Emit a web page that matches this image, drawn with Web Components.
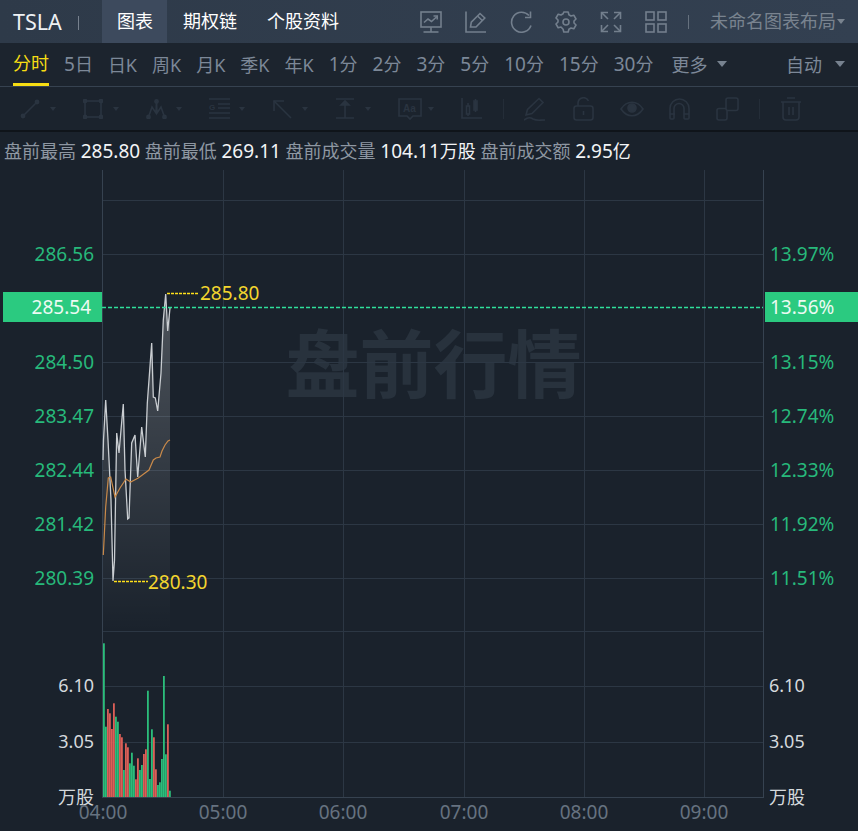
<!DOCTYPE html>
<html><head><meta charset="utf-8">
<style>
html,body{margin:0;padding:0;background:#1a222c;}
body{width:858px;height:831px;overflow:hidden;font-family:"Noto Sans","Noto Sans CJK SC",sans-serif;}
</style></head>
<body>
<app-header></app-header>
<period-bar></period-bar>
<draw-bar></draw-bar>
<quote-info></quote-info>
<chart-panel></chart-panel>
<script>
const FONT='"Noto Sans","Noto Sans CJK SC",sans-serif';
function mk(name,css,html){
  customElements.define(name,class extends HTMLElement{
    constructor(){super();const r=this.attachShadow({mode:'open'});r.innerHTML='<style>'+css+'</style>'+html;}
  });
}
const ico=(w,h,body,extra='')=>`<svg width="${w}" height="${h}" viewBox="0 0 ${w} ${h}" fill="none" stroke="currentColor" stroke-width="1.6" ${extra}>${body}</svg>`;

mk('app-header',`
:host{display:flex;align-items:center;height:43px;background:linear-gradient(90deg,#2e3a49,#334051);color:#fff;font-size:18px;line-height:43px;box-sizing:border-box;}
.sym{margin-left:13px;font-size:21.5px;width:65px;color:#eef1f4}
.sep{width:1px;height:14px;background:#77818e;margin-top:2px}
.tabs{display:flex;margin-left:23px}
.tab{padding:0 16px;color:#fff}
.tab.on{background:#3d4a5d;padding:0 14px 0 15px;width:36px}
.tab.t3{margin-left:-2px}
.icons{display:flex;align-items:center;margin-left:auto;color:#737f8d}
.icons svg{display:block}
.i{display:flex;width:45px;justify-content:center}
.lay{color:#79838f;font-size:18px;margin-left:21px;width:126px;white-space:nowrap}
.c{width:0;height:0;border-left:4px solid transparent;border-right:4px solid transparent;border-top:5px solid #79838f;margin:0 13px 0 1px;}
.s2{width:1px;height:14px;background:#66717e;margin-left:10px}
`,`
<span class="sym">TSLA</span><span class="sep"></span>
<div class="tabs"><span class="tab on">图表</span><span class="tab">期权链</span><span class="tab t3">个股资料</span></div>
<div class="icons">
<span class="i">${ico(22,22,'<rect x="1" y="1" width="20" height="15"/><path d="M4 11.500l4-3.500 3.500 2.500 5.500-5"/><path d="M13.500 5h3.700v3.500"/><path d="M11 16v5"/><path d="M3.500 21h15"/>')}</span>
<span class="i">${ico(22,22,'<path d="M1 .5V21h20"/><path d="M5.500 16l.8-4.800L15 2.500l4.800 4.500L11 16z"/><path d="M12.500 5l4.800 4.500"/>')}</span>
<span class="i">${ico(22,22,'<path d="M19 4.500A10 10 0 1 0 21 14.500"/><path d="M20.500 .5v6h-5.500"/>')}</span>
<span class="i">${ico(22,22,'<circle cx="11" cy="11" r="3"/><path d="M8.800 1h4.400l.7 2.800 2.100 1.200 2.800-.8 2.200 3.800-2 2v2l2 2-2.200 3.800-2.800-.8-2.100 1.200-.7 2.800H8.800l-.7-2.800L6 16l-2.800.8L1 13l2-2V9L1 7l2.200-3.800L6 4l2.100-1.200z" stroke-linejoin="round"/>')}</span>
<span class="i">${ico(22,22,'<path d="M1.500 8V1.500H8"/><path d="M1.500 1.500l6.500 6.500"/><path d="M14 1.500h6.500V8"/><path d="M20.500 1.500l-6.500 6.500"/><path d="M1.500 14v6.500H8"/><path d="M1.500 20.500l6.500-6.500"/><path d="M14 20.500h6.500V14"/><path d="M20.500 20.500l-6.500-6.500"/>')}</span>
<span class="i">${ico(22,22,'<rect x="1" y="1" width="8" height="8"/><rect x="13" y="1" width="8" height="8"/><rect x="1" y="13" width="8" height="8"/><rect x="13" y="13" width="8" height="8"/>')}</span>
<span class="s2"></span>
<span class="lay">未命名图表布局</span><span class="c"></span>
</div>`);

const periods=['<em>5</em>日','日K','周K','月K','季K','年K','<em>1</em>分','<em>2</em>分','<em>3</em>分','<em>5</em>分','<em>10</em>分','<em>15</em>分','<em>30</em>分'];
mk('period-bar',`
:host{display:flex;align-items:center;height:44px;box-sizing:border-box;border-bottom:1px solid #364250;background:#1c242e;font-size:18px;padding:0 0 2px 13px;color:#7c8898}
span{white-space:nowrap}
em{font-style:normal;font-size:19px}
.p{margin-left:15px}
.on{color:#f6dd13;align-self:flex-start;height:43px;line-height:41px;box-sizing:border-box;border-bottom:3px solid #f6dd13;}
.c{width:0;height:0;border-left:5px solid transparent;border-right:5px solid transparent;border-top:6px solid #77828f;}
.more{margin-left:18px}
.auto{margin-left:auto;margin-right:13px}
`,`
<span class="on">分时</span>${periods.map(p=>`<span class="p">${p}</span>`).join('')}
<span class="more">更多</span><span class="c" style="margin-left:10px"></span>
<span class="auto">自动</span><span class="c" style="margin-right:13px"></span>`);

const tool=(w,svg)=>`<span class="t" style="width:${w}px"><span class="b">${svg}</span><i></i></span>`;
mk('draw-bar',`
:host{display:flex;align-items:center;height:45px;box-sizing:border-box;border-bottom:2px solid #0f141a;background:#1b232d;color:#2a3440;padding-left:20px}
.t{display:flex;align-items:center;flex:none}
.b{display:block;width:30px;flex:none}
svg{display:block;flex:none}
i{display:block;width:0;height:0;border-left:3px solid transparent;border-right:3px solid transparent;border-top:4px solid currentColor}
.v{width:1px;height:20px;background:#242d38;flex:none}
`,`
${tool(63,ico(20,20,'<path d="M3 17L17 3"/><circle cx="3" cy="17" r="1.600" fill="currentColor"/><circle cx="17" cy="3" r="1.600" fill="currentColor"/>'))}
${tool(63,ico(20,20,'<rect x="2" y="2" width="16" height="16"/><circle cx="2" cy="2" r="1.600" fill="currentColor"/><circle cx="18" cy="2" r="1.600" fill="currentColor"/><circle cx="2" cy="18" r="1.600" fill="currentColor"/><circle cx="18" cy="18" r="1.600" fill="currentColor"/>'))}
${tool(63,ico(21,20,'<path d="M2.500 18L6 8l4 6 .5-12 .5 12 4-6 3.500 10"/><circle cx="2.500" cy="18" r="1.600" fill="currentColor"/><circle cx="18.500" cy="18" r="1.600" fill="currentColor"/><circle cx="10.500" cy="2.500" r="1.600" fill="currentColor"/>'))}
${tool(63,ico(21,21,'<path d="M0 1h21M9 6h12M9 10h12M0 15h21M0 20h21"/><text x="0" y="11.500" font-size="8" font-weight="700" stroke="none" fill="currentColor" font-family="Liberation Sans">G</text>'))}
${tool(63,ico(20,20,'<path d="M2 2l17 17"/><path d="M2 12V2h10"/>'))}
${tool(63,ico(20,21,'<path d="M1 1h18M1 20h18M10 3v17"/><path d="M6 7l4-4 4 4z" fill="currentColor"/>'))}
${tool(63,ico(24,24,'<path d="M1 2h22v17h-8l-3 3-3-3H1z"/><text x="5" y="15" font-size="10" font-weight="700" stroke="none" fill="currentColor" font-family="Liberation Sans">Aa</text>'))}
<span class="t" style="width:42px">${ico(21,21,'<path d="M1 0v20h20"/><rect x="5.500" y="8" width="3" height="8"/><rect x="13" y="3" width="3" height="9" fill="currentColor"/><path d="M7 5v3M7 16v2M14.500 1v2M14.500 12v2"/>')}</span>
<span class="v" style="margin-right:20px"></span>
<span class="t" style="width:49px">${ico(21,24,'<path d="M2 18L3.500 12.500 15 1.500l4 4L8 16.500z"/><path d="M0 23c4-3 6-3 9-1 4 2 6 1 12 1"/>')}</span>
<span class="t" style="width:47px">${ico(21,24,'<rect x="1" y="9" width="19" height="14" rx="2.500"/><path d="M5 9V6a5.500 5.500 0 0 1 10.500-2"/><path d="M10.500 14v4"/>')}</span>
<span class="t" style="width:49px">${ico(24,18,'<path d="M1 9c6-9 16-9 22 0-6 9-16 9-22 0z"/><circle cx="12" cy="8" r="4" fill="currentColor"/>')}</span>
<span class="t" style="width:47px">${ico(21,22,'<path d="M1 20V10.500a9.500 9.500 0 0 1 19 0V20a1 1 0 0 1-1 1h-3a1 1 0 0 1-1-1V10.500a5 5 0 0 0-10 0V20a1 1 0 0 1-1 1H2a1 1 0 0 1-1-1zM1 16h5M15 16h5"/>')}</span>
<span class="t" style="width:43px">${ico(23,24,'<rect x="10" y="1" width="12" height="12.500" rx="2"/><path d="M10 11.500H3a2 2 0 0 0-2 2V21a2 2 0 0 0 2 2h6a2 2 0 0 0 2-2v-7.500"/>')}</span>
<span class="v" style="margin-right:21px"></span>
<span class="t">${ico(20,24,'<path d="M6 1h8M0 5h20M2 5v15a3 3 0 0 0 3 3h10a3 3 0 0 0 3-3V5M8 10v8M12 10v8"/>')}</span>`);

mk('quote-info',`
:host{display:block;height:38px;line-height:38px;padding-left:4px;font-size:18px;color:#8e97a2;background:#1a222c;white-space:nowrap;box-sizing:border-box}
b{font-weight:400;color:#f2f4f6;font-size:19px}
u{text-decoration:none;font-size:18px}
`,`盘前最高 <b>285.80</b> 盘前最低 <b>269.11</b> 盘前成交量 <b>104.11<u>万股</u></b> 盘前成交额 <b>2.95<u>亿</u></b>`);

const white=[[103,460],[103.5,440],[105.7,400],[108,440],[111,500],[113,581],[114.5,560],[116.7,433],[119,453],[121,430],[123.3,404],[125,470],[127.7,519],[129,518],[131.7,443],[135,435],[137.7,477],[141.7,427],[145.3,457],[147.3,403],[149,380],[151.7,343],[153.3,397],[155.3,398],[157.7,411],[161,373],[163.3,320],[165.7,294],[167.7,331],[170,308]];
const orange=[[103.3,555],[105.7,507],[108.3,478],[110.7,477],[115,497],[120,488],[126,479],[130.7,482],[138.3,478],[145,473],[149,470],[153.3,460],[156,458],[160,457],[162,451],[165,445],[168,441],[170,440]];
const pts=a=>a.map(p=>p.join(',')).join(' ');
const tops=[40,290,237,250,297,220,260,275,312,322,420,340,352,400,368,407,448,385,420,405,372,358,182,447,298,322,418,465,457,387,138,373,283,482];
const cols='GGRRRRGGRRGRRGGGRRGGRRGGGRRGGGGGRG';
const bars=tops.map((t,i)=>{const y=630+t/3;return `<rect x="${103+2*i}" y="${y.toFixed(1)}" width="1.8" height="${(797-y).toFixed(1)}" fill="${cols[i]=='G'?'#2bbd7b':'#dc5f58'}"/>`}).join('');
const H=[200,254,362,416,470,524,578,631,686,742];
const V=[223,343,464,584,704];
const leftL=[[254,'286.56'],[362,'284.50'],[416,'283.47'],[470,'282.44'],[524,'281.42'],[578,'280.39']];
const rightL=[[254,'13.97%'],[362,'13.15%'],[416,'12.74%'],[470,'12.33%'],[524,'11.92%'],[578,'11.51%']];
const times=[[103,'04:00'],[223,'05:00'],[343,'06:00'],[464,'07:00'],[584,'08:00'],[704,'09:00']];
mk('chart-panel',`
:host{display:block;position:relative;height:661px;background:#1a222c}
svg{position:absolute;left:0;top:0;display:block}
text{font-family:${FONT};font-size:19px}
.wm{font-size:74px;font-weight:700;fill:#28323d}
.g{fill:#27b97b}
.w{fill:#d5d9dd;font-size:18px}
.t{fill:#667280}
.y{fill:#f3d52e}
.dy{stroke:#ffe01a;stroke-width:1.4;stroke-dasharray:3 1}
.dg{stroke:#2fe09a;stroke-width:1.4;stroke-dasharray:4 2}
`,`<svg width="858" height="661" viewBox="0 170 858 661">
<defs><linearGradient id="ar" x1="0" y1="300" x2="0" y2="631" gradientUnits="userSpaceOnUse"><stop offset="0" stop-color="#fff" stop-opacity=".22"/><stop offset="1" stop-color="#fff" stop-opacity="0"/></linearGradient></defs>
<text class="wm" x="433.500" y="392" text-anchor="middle">盘前行情</text>
<g stroke="#2c3744" stroke-width="1" shape-rendering="crispEdges">
${H.map(y=>`<line x1="102" x2="763" y1="${y}.5" y2="${y}.5"/>`).join('')}
${V.map(x=>`<line x1="${x}.5" x2="${x}.5" y1="170" y2="797"/>`).join('')}
</g>
<path d="M102.500 170V797.500H763.500V170" fill="none" stroke="#364250" shape-rendering="crispEdges"/>
<polygon points="${pts(white)} 170,631 103,631" fill="url(#ar)"/>
<polyline points="${pts(white)}" fill="none" stroke="#c9cdd1" stroke-width="1.300"/>
<polyline points="${pts(orange)}" fill="none" stroke="#c98a4a" stroke-width="1.200"/>
${bars}
<line class="dg" x1="102" x2="763" y1="307.500" y2="307.500"/>
<line class="dy" x1="167" x2="198" y1="293.500" y2="293.500"/>
<line class="dy" x1="114" x2="148" y1="581.500" y2="581.500"/>
<rect x="3" y="292" width="99" height="30" fill="#2bca80"/>
<rect x="765" y="292" width="93" height="30" fill="#2bca80"/>
<text x="91" y="314" text-anchor="end" fill="#ecfaf3">285.54</text>
<text x="770" y="314" fill="#ecfaf3">13.56%</text>
<text class="y" x="200" y="300">285.80</text>
<text class="y" x="148" y="589">280.30</text>
${leftL.map(l=>`<text class="g" x="94" y="${l[0]+7}" text-anchor="end">${l[1]}</text>`).join('')}
${rightL.map(l=>`<text class="g" x="770" y="${l[0]+7}">${l[1]}</text>`).join('')}
<text class="w" x="94" y="692" text-anchor="end">6.10</text>
<text class="w" x="94" y="748" text-anchor="end">3.05</text>
<text class="w" x="94" y="804" text-anchor="end">万股</text>
<text class="w" x="769" y="692">6.10</text>
<text class="w" x="769" y="748">3.05</text>
<text class="w" x="769" y="804">万股</text>
${times.map(t=>`<text class="t" x="${t[0]}" y="819" text-anchor="middle">${t[1]}</text>`).join('')}
</svg>`);
</script>
</body></html>
